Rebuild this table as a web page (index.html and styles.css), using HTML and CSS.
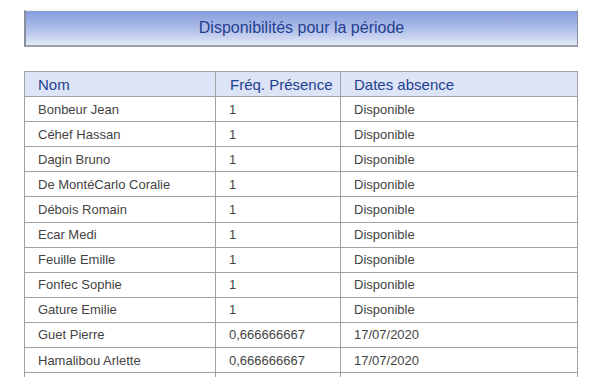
FILE: index.html
```html
<!DOCTYPE html>
<html lang="fr">
<head>
<meta charset="utf-8">
<title>Disponibilités</title>
<link rel="stylesheet" href="styles.css">
</head>
<body>
<div class="page">
  <div class="banner">Disponibilités pour la période</div>
  <table class="grid">
    <thead>
      <tr><th class="c1">Nom</th><th class="c2">Fréq. Présence</th><th class="c3">Dates absence</th></tr>
    </thead>
    <tbody>
      <tr><td>Bonbeur Jean</td><td>1</td><td>Disponible</td></tr>
      <tr><td>Céhef Hassan</td><td>1</td><td>Disponible</td></tr>
      <tr><td>Dagin Bruno</td><td>1</td><td>Disponible</td></tr>
      <tr><td>De MontéCarlo Coralie</td><td>1</td><td>Disponible</td></tr>
      <tr><td>Débois Romain</td><td>1</td><td>Disponible</td></tr>
      <tr><td>Ecar Medi</td><td>1</td><td>Disponible</td></tr>
      <tr><td>Feuille Emille</td><td>1</td><td>Disponible</td></tr>
      <tr><td>Fonfec Sophie</td><td>1</td><td>Disponible</td></tr>
      <tr><td>Gature Emilie</td><td>1</td><td>Disponible</td></tr>
      <tr><td>Guet Pierre</td><td>0,666666667</td><td>17/07/2020</td></tr>
      <tr><td>Hamalibou Arlette</td><td>0,666666667</td><td>17/07/2020</td></tr>
      <tr class="tail"><td></td><td></td><td></td></tr>
    </tbody>
  </table>
</div>
</body>
</html>
```

FILE: styles.css
```css
html, body {
  margin: 0;
  padding: 0;
  background: #ffffff;
  overflow: hidden;
}

.page {
  padding: 10px 0 0 24px;
  width: 554px;
  font-family: "Liberation Sans", Arial, sans-serif;
}

.banner {
  box-sizing: border-box;
  height: 37px;
  border-top: 1px solid #f4efe0;
  border-left: 2px solid #8a8f9c;
  border-right: 1px solid #8a8f9c;
  border-bottom: 2px solid #9a9ea8;
  background: linear-gradient(to bottom, #869cdd 0%, #b1c0ea 55%, #e2e8f7 100%);
  color: #243f8f;
  font-size: 16px;
  display: flex;
  align-items: center;
  justify-content: center;
  padding-bottom: 1px;
}

.grid {
  margin-top: 24px;
  width: 554px;
  border-collapse: collapse;
  table-layout: fixed;
}

.grid th,
.grid td {
  box-sizing: border-box;
  border: 1px solid #a3a3a3;
  height: 25.1px;
  padding: 0 0 0 13px;
  text-align: left;
  white-space: nowrap;
  overflow: hidden;
}

.grid th {
  background: #dce4f5;
  color: #1f3f93;
  font-size: 15px;
  font-weight: normal;
}

.grid td {
  color: #444444;
  font-size: 13px;
}

.grid .c1 { width: 191px; }
.grid .c2 { width: 125px; }
.grid th.c2 { padding-left: 14px; }
```
